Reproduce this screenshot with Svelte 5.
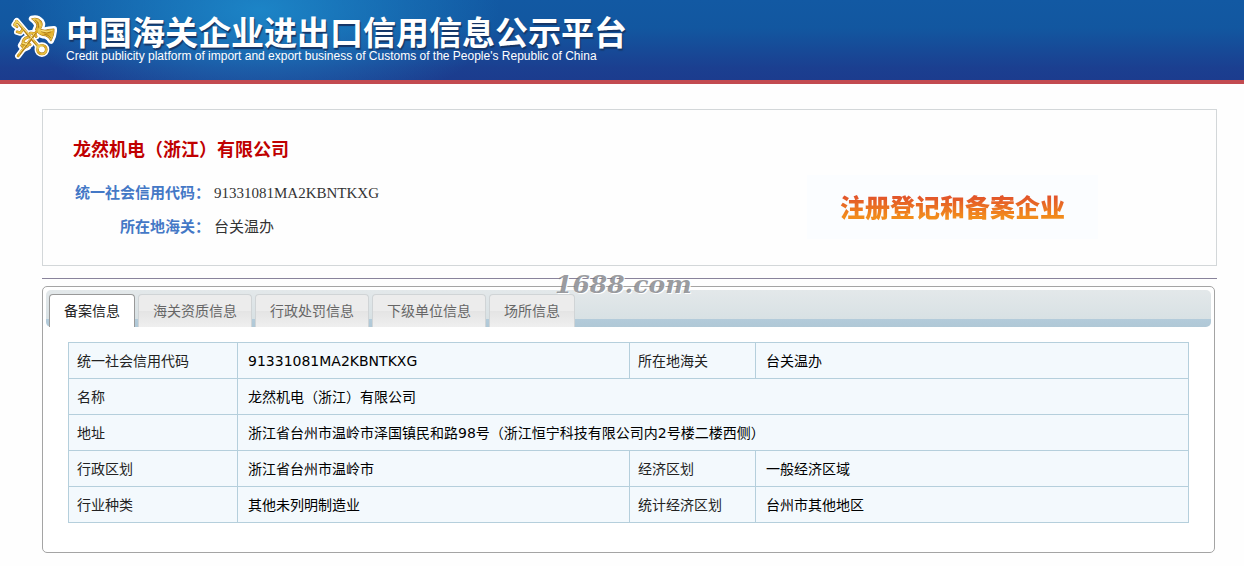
<script lang="ts">
	interface Field {
		label: string;
		value: string;
	}

	const company = '龙然机电（浙江）有限公司';
	const creditCode = '91331081MA2KBNTKXG';

	const tabs = ['备案信息', '海关资质信息', '行政处罚信息', '下级单位信息', '场所信息'];

	const rows: Field[][] = [
		[
			{ label: '统一社会信用代码', value: creditCode },
			{ label: '所在地海关', value: '台关温办' }
		],
		[{ label: '名称', value: company }],
		[{ label: '地址', value: '浙江省台州市温岭市泽国镇民和路98号（浙江恒宁科技有限公司内2号楼二楼西侧）' }],
		[
			{ label: '行政区划', value: '浙江省台州市温岭市' },
			{ label: '经济区划', value: '一般经济区域' }
		],
		[
			{ label: '行业种类', value: '其他未列明制造业' },
			{ label: '统计经济区划', value: '台州市其他地区' }
		]
	];

	let active = $state(0);
</script>

<header class="banner">
	<svg class="emblem" viewBox="30 8 140 140" aria-hidden="true">
		<defs>
			<linearGradient id="gold" x1="0" y1="0" x2="1" y2="1">
				<stop offset="0" stop-color="#f8df6c" />
				<stop offset="0.5" stop-color="#dca823" />
				<stop offset="1" stop-color="#efcc50" />
			</linearGradient>
			<g id="rods">
				<path d="M54 136 L116 54" />
				<path d="M50 32 L113 106" />
				<path d="M50 33 L43 43 L51 49 M51 64 L61 67 L69 56" />
				<circle cx="125" cy="117" r="13" />
				<path d="M90 68 Q104 66 108 78 M84 80 Q68 84 69 98 Q78 106 90 102" />
			</g>
			<g id="wings">
				<path d="M95 25 Q112 20 123 33 Q130 44 120 57 L112 63 L106 57 Q113 48 109 40 Q104 31 95 25Z" />
				<path d="M116 55 Q134 63 144 57 L161 56 Q162 72 152 91 Q146 79 136 76 Q121 75 112 65Z" />
				<path d="M68 95 L82 97 L84 109 L70 115 L62 105Z" />
			</g>
		</defs>
		<use href="#rods" class="halo" />
		<use href="#wings" class="halo" />
		<use href="#rods" class="rim" />
		<use href="#wings" class="rim-fine" />
		<use href="#rods" class="metal" />
		<use href="#wings" class="plate" />
		<g class="shade">
			<path d="M105 29 Q117 36 115 51 M124 64 Q139 72 151 65 M133 71 Q145 72 152 82" />
			<path d="M60 130 L106 69 M53 39 L109 104 M67 102 L79 106" />
		</g>
		<g class="shine">
			<path d="M112 28 Q121 35 120 46 M124 61 Q140 68 156 60" />
			<path d="M55 35 L101 89 M57 129 L102 69 M114 113 Q119 105 128 108 M70 98 L80 101" />
		</g>
	</svg>
	<div class="brand">
		<h1>中国海关企业进出口信用信息公示平台</h1>
		<p>Credit publicity platform of import and export business of Customs of the People's Republic of China</p>
	</div>
</header>

<main>
	<section class="summary">
		<div class="identity">
			<h2>{company}</h2>
			<dl>
				<dt>统一社会信用代码：</dt>
				<dd>{creditCode}</dd>
				<dt>所在地海关：</dt>
				<dd>台关温办</dd>
			</dl>
		</div>
		<div class="stamp"><span>注册登记和备案企业</span></div>
	</section>

	<section class="details">
		<span class="watermark">1688.com</span>
		<div class="tabs" role="tablist">
			{#each tabs as tab, i}
				<button
					type="button"
					role="tab"
					class:active={active === i}
					aria-selected={active === i}
					onclick={() => (active = i)}
				>
					{tab}
				</button>
			{/each}
		</div>

		<div class="panel" role="tabpanel">
			<table>
				<colgroup>
					<col class="col-label" />
					<col class="col-value" />
					<col class="col-label-2" />
					<col />
				</colgroup>
				<tbody>
					{#each rows as row}
						<tr>
							{#each row as field}
								<th scope="row">{field.label}</th>
								<td colspan={row.length === 1 ? 3 : 1}>{field.value}</td>
							{/each}
						</tr>
					{/each}
				</tbody>
			</table>
		</div>
	</section>
</main>

<style>
	:global(body) {
		margin: 0;
		background: #fefefe;
		font-family: 'DejaVu Sans', 'Noto Sans CJK SC', sans-serif;
		font-size: 14px;
		color: #111;
	}

	.banner {
		display: flex;
		align-items: flex-start;
		gap: 9px;
		box-sizing: border-box;
		height: 84px;
		padding: 13px 10px 0;
		border-bottom: 4px solid #c24a50;
		background:
			radial-gradient(ellipse 240px 110px at 260px 10px, rgba(30, 140, 205, 0.85), rgba(30, 140, 205, 0)),
			linear-gradient(#1259a3, #1257a0 35%, #1b3f90 85%, #1c3c8e);
	}

	.emblem {
		flex-shrink: 0;
		width: 47px;
		height: 47px;
		fill: none;
		stroke-linecap: round;
		stroke-linejoin: round;
	}

	.halo {
		fill: #fff;
		stroke: #fff;
		stroke-width: 18;
	}

	.rim {
		stroke: #a87518;
		stroke-width: 8;
	}

	.rim-fine {
		stroke: #a87518;
		stroke-width: 3;
	}

	.metal {
		stroke: url(#gold);
		stroke-width: 6;
	}

	.plate {
		fill: url(#gold);
	}

	.shade {
		stroke: #9a6710;
		stroke-width: 2;
	}

	.shine {
		stroke: #fff3a6;
		stroke-width: 2;
	}

	.brand {
		color: #fff;
		white-space: nowrap;
	}

	h1 {
		margin: 0;
		font: bold 33px/36px 'Noto Sans CJK SC', sans-serif;
		text-shadow: 1px 2px 1px #163565;
	}

	.brand p {
		margin: 0;
		font: 12px/14px 'Liberation Sans', sans-serif;
	}

	main {
		padding: 25px 27px 14px 42px;
	}

	.summary {
		display: flex;
		justify-content: space-between;
		align-items: flex-start;
		box-sizing: border-box;
		min-height: 157px;
		padding: 27px 118px 0 30px;
		border: 1px solid #d3d7d9;
	}

	.identity {
		font-family: 'Liberation Serif', 'Noto Sans CJK SC', sans-serif;
	}

	h2 {
		margin: 0 0 13px;
		font-size: 18px;
		line-height: 26px;
		color: #c00000;
	}

	dl {
		display: grid;
		grid-template-columns: 137px auto;
		column-gap: 4px;
		margin: 0;
		font-size: 15px;
		line-height: 34px;
	}

	dt {
		font-weight: bold;
		text-align: right;
		white-space: nowrap;
		color: #4478c6;
	}

	dd {
		margin: 0;
		color: #333;
	}

	.stamp {
		margin-top: 38px;
		padding: 13px 33px 15px;
		background: #fbfdff;
		font: 900 25px/36px 'Noto Sans CJK SC', sans-serif;
	}

	.stamp span {
		background: linear-gradient(#e2552a 25%, #f28c1c 80%);
		background-clip: text;
		-webkit-background-clip: text;
		color: transparent;
	}

	.details {
		position: relative;
		box-sizing: border-box;
		min-height: 267px;
		margin: 20px 2px 0 0;
		padding: 3px;
		border: 1px solid #a4a4a4;
		border-radius: 5px;
		background: #fff;
	}

	.details::before {
		content: '';
		position: absolute;
		top: -9px;
		left: -1px;
		right: -3px;
		height: 1px;
		background: #89839b;
	}

	.watermark {
		position: absolute;
		top: -16px;
		left: 512px;
		font: italic bold 25px/28px 'DejaVu Serif', serif;
		color: rgba(110, 112, 118, 0.7);
		text-shadow: 1px 1px 0 #fff;
		pointer-events: none;
	}

	.tabs {
		display: flex;
		gap: 3px;
		padding: 4px 3px 0;
		border-radius: 5px;
		background: linear-gradient(#e3e8ea, #d8e1e4 29px, #b3cbda 29px, #b0c8d6);
	}

	.tabs button {
		height: 33px;
		padding: 0 14px 2px;
		border: 1px solid #d0d4d6;
		border-bottom: 0;
		border-radius: 4px 4px 0 0;
		background: linear-gradient(#ececec 50%, #e4e4e4 50%, #efefef);
		font: inherit;
		color: #666;
		cursor: pointer;
	}

	.tabs button.active {
		border-color: #999;
		background: #fff;
		color: #222;
	}

	.panel {
		padding: 15px 22px 0;
	}

	table {
		width: 100%;
		table-layout: fixed;
		border-collapse: collapse;
		background: #f3f9fd;
	}

	.col-label {
		width: 169px;
	}

	.col-value {
		width: 35%;
	}

	.col-label-2 {
		width: 126px;
	}

	th,
	td {
		height: 35px;
		padding: 0 10px;
		border: 1px solid #b5cfdc;
		line-height: 20px;
		text-align: left;
	}

	th {
		padding: 0 8px;
		font-weight: normal;
		color: #222;
	}

	td {
		color: #000;
	}
</style>
